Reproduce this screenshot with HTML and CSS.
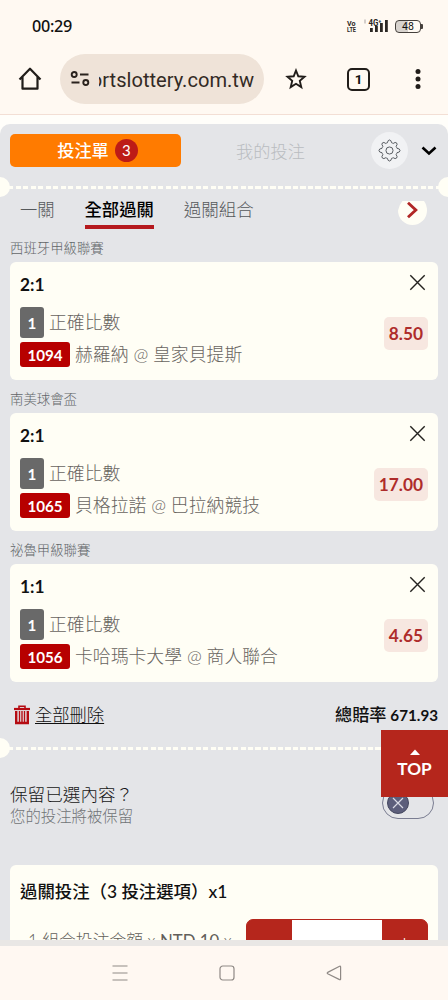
FILE: index.html
```html
<!DOCTYPE html>
<html lang="zh-Hant">
<head>
<meta charset="utf-8">
<title>投注單</title>
<link rel="stylesheet" href="styles.css">
</head>
<body>
<div class="phone">
  <header class="status">
    <span class="clock">00:29</span>
    <svg class="volte" width="11" height="16" viewBox="0 0 11 16"><text x="1" y="7.500" textLength="8.500" lengthAdjust="spacingAndGlyphs">Vo</text><text x="1" y="14" textLength="9" lengthAdjust="spacingAndGlyphs">LTE</text></svg>
    <svg class="signal" width="26" height="18" viewBox="0 0 26 18"><g fill="#2b2724"><rect x="7" y="11" width="2.800" height="4"/><rect x="12" y="9" width="2.800" height="6"/><rect x="17" y="6" width="2.800" height="9"/><rect x="22" y="3" width="2.800" height="12"/></g><rect x="1" y="2.500" width="2" height="4" fill="#d4ceca"/><text x="5.500" y="9" class="signal-text" textLength="13" lengthAdjust="spacingAndGlyphs">4G⁺</text></svg>
    <span class="battery">48</span><i class="battery-tip"></i>
  </header>
  <nav class="toolbar">
    <svg class="home" width="24" height="24" viewBox="0 0 24 24" fill="none" stroke="#211d1a" stroke-width="2.200"><path d="M1.500 12.500 12 1.700l10.500 10.800M4.500 10v11.700h15V10" stroke-linejoin="round"/></svg>
    <div class="address">
      <svg width="20" height="16" viewBox="0 0 20 16" fill="none" stroke="#2a221d" stroke-width="1.900"><circle cx="4.200" cy="3.500" r="2.500"/><path d="M10 3.500h8.500M1.500 11.500h8"/><circle cx="15.800" cy="11.500" r="2.500"/></svg>
      <div class="url"><span>ortslottery.com.tw</span></div>
    </div>
    <svg class="star" width="22" height="22" viewBox="0 0 22 22" fill="none" stroke="#211d1a" stroke-width="1.900"><path d="m11 2.500 2.300 5.800 6.200.5-4.700 4.100 1.500 6.200-5.300-3.300-5.300 3.300 1.500-6.200-4.700-4.100 6.200-.5z"/></svg>
    <span class="tabcount">1</span>
    <svg class="more" width="6" height="22" viewBox="0 0 6 22" fill="#211d1a"><circle cx="3" cy="3.400" r="2.500"/><circle cx="3" cy="11" r="2.500"/><circle cx="3" cy="18.500" r="2.500"/></svg>
  </nav>
  <main class="page">
    <section class="slip">
      <div class="main-tabs">
        <div class="tab-active"><span>投注單</span><b class="count">3</b></div>
        <div class="tab-idle">我的投注</div>
        <div class="gear"><svg width="23" height="23" viewBox="0 0 24 24" fill="none" stroke="#53575c" stroke-width="1"><circle cx="12" cy="12" r="3.700"/><path d="M9.800 3.900Q10.300 1 12 1t2.200 2.900q.9.300 1.600.8 2.300-1.900 3.600-.6t-.5 3.600q.6.900.9 2 3.200.3 3.200 2.300t-3.200 2.300q-.3 1.100-.9 2 1.800 2.300.5 3.600t-3.600-.4q-.8.500-1.600.7Q13.700 23 12 23t-2.200-2.800q-.9-.2-1.600-.7-2.300 1.700-3.600.4t.5-3.600q-.6-.9-.9-2Q1 14 1 12t3.200-2.300q.3-1.100.9-2-1.800-2.300-.5-3.600t3.600.6q.7-.5 1.600-.8z" stroke-linejoin="round"/></svg></div>
        <svg class="chevron" width="16" height="10" viewBox="0 0 16 10" fill="none" stroke="#000" stroke-width="2.600"><path d="m1.500 1.500 6.500 6 6.500-6"/></svg>
      </div>
      <div class="divider"><i></i><i></i></div>
      <div class="sub-tabs">
        <span class="sub">一關</span><span class="sub current">全部過關</span><span class="sub">過關組合</span>
        <svg class="next" width="30" height="25" viewBox="0 0 30 25"><path d="M4.500 1H26q3 4 3 9.500A14.500 14.500 0 0 1 0 10.500Q1 5 4.500 1" fill="#fffef5"/><path d="m10 2.800 7.800 7.200L10 17.200" fill="none" stroke="#b12625" stroke-width="2.900"/></svg>
      </div>

      <div class="league">西班牙甲級聯賽</div>
      <article class="card">
        <div class="pick"><h3>2:1</h3>
          <div class="line"><b class="num">1</b><span>正確比數</span></div>
          <div class="line"><b class="code">1094</b><span>赫羅納 @ 皇家貝提斯</span></div>
        </div>
        <div class="side"><svg width="17" height="17" viewBox="0 0 17 17"><path d="m1.300 1.300 14.400 14.400M15.700 1.300 1.300 15.700" stroke="#24221f" stroke-width="1.400"/></svg><b class="odds">8.50</b></div>
      </article>
      <div class="league">南美球會盃</div>
      <article class="card">
        <div class="pick"><h3>2:1</h3>
          <div class="line"><b class="num">1</b><span>正確比數</span></div>
          <div class="line"><b class="code">1065</b><span>貝格拉諾 @ 巴拉納競技</span></div>
        </div>
        <div class="side"><svg width="17" height="17" viewBox="0 0 17 17"><path d="m1.300 1.300 14.400 14.400M15.700 1.300 1.300 15.700" stroke="#24221f" stroke-width="1.400"/></svg><b class="odds">17.00</b></div>
      </article>
      <div class="league">祕魯甲級聯賽</div>
      <article class="card">
        <div class="pick"><h3>1:1</h3>
          <div class="line"><b class="num">1</b><span>正確比數</span></div>
          <div class="line"><b class="code">1056</b><span>卡哈瑪卡大學 @ 商人聯合</span></div>
        </div>
        <div class="side"><svg width="17" height="17" viewBox="0 0 17 17"><path d="m1.300 1.300 14.400 14.400M15.700 1.300 1.300 15.700" stroke="#24221f" stroke-width="1.400"/></svg><b class="odds">4.65</b></div>
      </article>

      <div class="summary">
        <svg width="16" height="20" viewBox="0 0 16 20" fill="none" stroke="#b50b12"><path d="M0 4h16" stroke-width="2.200"/><path d="M5 3V1.200h6V3" stroke-width="1.600"/><path d="M2.200 6v12h11.600V6" stroke-width="2.400"/><path d="M5.500 6v12M8 6v12M10.500 6v12" stroke-width="1.400"/></svg>
        <span class="clear">全部刪除</span>
        <span class="total">總賠率 <span class="amount">671.93</span></span>
      </div>
      <div class="divider"><i></i><i></i></div>
      <div class="keep">
        <div><div class="keep-title">保留已選內容？</div><div class="keep-note">您的投注將被保留</div></div>
        <div class="toggle"><svg width="22" height="22" viewBox="0 0 22 22"><circle cx="11" cy="11" r="10.500" fill="#5c5e7b" stroke="#44475e"/><path d="m6 6 10 10M16 6 6 16" stroke="#d9dae4" stroke-width="1.200"/></svg></div>
      </div>
      <div class="parlay">
        <div class="parlay-title">過關投注（3 投注選項）x1</div>
        <div class="stake"><span class="formula">1 組合投注金額 x <em>NTD 10</em> x</span>
          <div class="stepper"><b>−</b><span></span><b>+</b></div></div>
      </div>
    </section>
    <a class="top"><svg width="10" height="6" viewBox="0 0 10 6"><path d="m0 6 5-5.500L10 6z" fill="#fff"/></svg><span>TOP</span></a>
  </main>
  <footer class="system">
    <svg width="16" height="16" viewBox="0 0 16 16" stroke="#8f8985" stroke-width="1.200"><path d="M.5 1h15M.5 8h15M.5 15h15"/></svg>
    <svg width="16" height="16" viewBox="0 0 16 16" fill="none" stroke="#8f8985" stroke-width="1.200"><rect x="1" y="1" width="14" height="14" rx="2.800"/></svg>
    <svg width="16" height="16" viewBox="0 0 16 16" fill="none" stroke="#8f8985" stroke-width="1.200" stroke-linejoin="round"><path d="M14.600 2v12q0 1-1 .6L1.700 8.800q-1-.7 0-1.400L13.600 1.300q1-.4 1 .7z"/></svg>
  </footer>
</div>
</body>
</html>
```
FILE: styles.css
```css
* { box-sizing: border-box; }
body { margin: 0; font-family: Lato, "Noto Sans CJK TC", sans-serif; color: #111; background: #fffdf8; }
svg { display: block; flex: none; }
.phone { width: 448px; height: 1000px; overflow: hidden; display: flex; flex-direction: column; background: #fff9f2; }

.status { height: 50px; flex: none; display: flex; align-items: center; padding: 2px 25px 0 32px; }
.clock { font: 500 16.200px/20px "Noto Sans", sans-serif; letter-spacing: -.3px; flex: 1; }
.volte { margin-right: 6px; font: 700 8px Roboto, sans-serif; fill: #2b2724; }
.signal { margin-right: 6px; }
.signal-text { font: 700 8.500px Roboto, sans-serif; fill: #2b2724; }
.battery { width: 26px; height: 13px; border: 1.300px solid #45403c; border-radius: 4px; font: 10.500px/12px Roboto, sans-serif; text-align: center; background: linear-gradient(90deg, #d8d3ce 48%, transparent 48%); }
.battery-tip { width: 2px; height: 5px; background: #45403c; border-radius: 0 1px 1px 0; }

.toolbar { height: 65px; flex: none; border-bottom: 1px solid #f3dfd5; display: flex; align-items: center; padding: 0 27px 6px 18px; }
.address { width: 204px; height: 50px; margin-left: 18px; border-radius: 25px; background: #efe3d8; display: flex; align-items: center; padding: 0 10px; }
.url { width: 155px; margin-left: auto; overflow: hidden; display: flex; justify-content: flex-end; font: 20.100px/30px Roboto, sans-serif; color: #332a24; white-space: nowrap; padding-top: 2px; }
.star { margin-left: 21px; }
.tabcount { width: 23px; height: 23px; margin-left: 40px; border: 2.300px solid #211d1a; border-radius: 5px; font: 700 13.500px/19px Roboto, sans-serif; text-align: center; }
.more { margin-left: auto; }

.page { height: 825px; flex: none; padding-top: 9px; overflow: hidden; position: relative; background: #fffefa; }
.slip { height: 816px; background: #e4e5e8; border-radius: 10px 10px 0 0; padding: 8px 10px 0; overflow: hidden; }
.main-tabs { height: 37px; display: flex; align-items: center; }
.tab-active { width: 171px; height: 33px; border-radius: 5px; background: #ff7b00; color: #fff; display: flex; justify-content: center; align-items: center; gap: 6px; font-weight: 500; font-size: 17.200px; line-height: 30px; padding-left: 4px; }
.count { width: 23px; height: 23px; border-radius: 50%; background: #bd1b17; font: 400 15px/23px Lato, sans-serif; text-align: center; }
.tab-idle { width: 179px; text-align: center; font-size: 17.200px; font-weight: 300; color: #b9bcc0; }
.gear { width: 37px; height: 37px; border-radius: 50%; background: #f1f2f4; display: grid; place-items: center; margin-left: 11px; }
.chevron { margin-left: 13px; }
.divider { height: 20px; margin: 8px -10px 0; display: flex; justify-content: space-between; align-items: center; background: repeating-linear-gradient(90deg, #fffef5 0 5px, transparent 5px 7.500px) 8px 9px / 432px 3px no-repeat; }
.divider i { width: 10px; height: 20px; background: #fffef5; border-radius: 0 10px 10px 0; }
.divider i:last-child { border-radius: 10px 0 0 10px; }
.sub-tabs { height: 42px; display: flex; align-items: flex-start; padding-left: 10px; gap: 30px; }
.sub { height: 32px; padding-top: 1px; font-size: 17.300px; line-height: 24px; font-weight: 300; color: #55585b; white-space: nowrap; }
.sub:nth-child(3) { font-size: 17.500px; }
.current { color: #000; font-weight: 500; border-bottom: 4px solid #b5191e; }
.next { margin: 3px 10px 0 auto; }

.league { height: 23px; font-size: 13.400px; line-height: 19px; font-weight: 300; color: #626568; }
.card { height: 118px; background: #fffef5; border-radius: 6px; padding: 11px 10px; display: flex; justify-content: space-between; margin-bottom: 10px; }
.card h3 { margin: 0 0 10px; font: 700 17.300px/23px Lato, sans-serif; }
.line { height: 32px; display: flex; align-items: center; gap: 5px; font-size: 17.850px; line-height: 30px; font-weight: 300; color: #68645f; white-space: nowrap; }
.num, .code { color: #fff; border-radius: 3px; text-align: center; font-size: 15.200px; font-weight: 700; }
.num { width: 24px; height: 31px; line-height: 33px; background: #696969; }
.code { width: 50px; height: 25px; line-height: 26px; background: #b70000; }
.side { display: flex; flex-direction: column; align-items: flex-end; }
.side svg { margin: 1px 2px 0 0; }
.odds { height: 33px; margin-top: 26px; padding: 0 5px; border-radius: 5px; background: #f7e7e0; color: #ae2c2b; font-size: 17.300px; line-height: 33px; }

.summary { height: 45px; display: flex; align-items: center; padding-left: 4px; }
.clear { margin-left: 5px; font-size: 17.300px; font-weight: 300; line-height: 24px; text-decoration: underline; text-underline-offset: 2px; }
.total { margin-left: auto; font-size: 17.200px; line-height: 24px; font-weight: 500; word-spacing: -.5px; }
.amount { font-size: 15.200px; font-weight: 700; }
.summary + .divider { margin-top: 1px; }
.keep { height: 62px; margin-top: 25px; display: flex; justify-content: space-between; align-items: flex-start; }
.keep-title { font-size: 17.600px; line-height: 24px; font-weight: 300; color: #161616; }
.keep-note { font-size: 15.400px; line-height: 18px; font-weight: 300; color: #707376; }
.toggle { width: 52px; height: 32px; border: 1px solid #7a7d91; border-radius: 16px; padding: 4px; margin: 4px 4px 0 0; }
.parlay { height: 110px; margin-top: 20px; background: #fffef5; border-radius: 6px; padding: 14px 10px; }
.parlay-title { font-size: 17.400px; line-height: 26px; font-weight: 500; white-space: nowrap; }
.stake { display: flex; margin-top: 14px; justify-content: space-between; }
.formula { padding: 9px 0 0 8px; font-size: 16.800px; line-height: 26px; font-weight: 300; color: #625f5a; white-space: nowrap; }
.formula em { font-style: normal; font-weight: 400; }
.stepper { width: 182px; height: 46px; border: 1px solid #b5261c; border-radius: 7px; background: #b5261c; display: grid; grid-template-columns: 45px 90px 45px; overflow: hidden; color: #fff; text-align: center; font-size: 24px; line-height: 44px; }
.stepper span { background: #fff; }
.stepper b { font-weight: 300; }
.top { position: absolute; right: 0; top: 615px; width: 67px; height: 67px; background: #b5261c; color: #fff; display: flex; flex-direction: column; align-items: center; padding-top: 19px; gap: 2px; font-size: 17.200px; line-height: 24px; font-weight: 700; }
.system { flex: 1; border-top: 6px solid #e9e7e5; background: #fff8f2; display: flex; justify-content: center; align-items: center; gap: 91px; padding-left: 6px; }
```
